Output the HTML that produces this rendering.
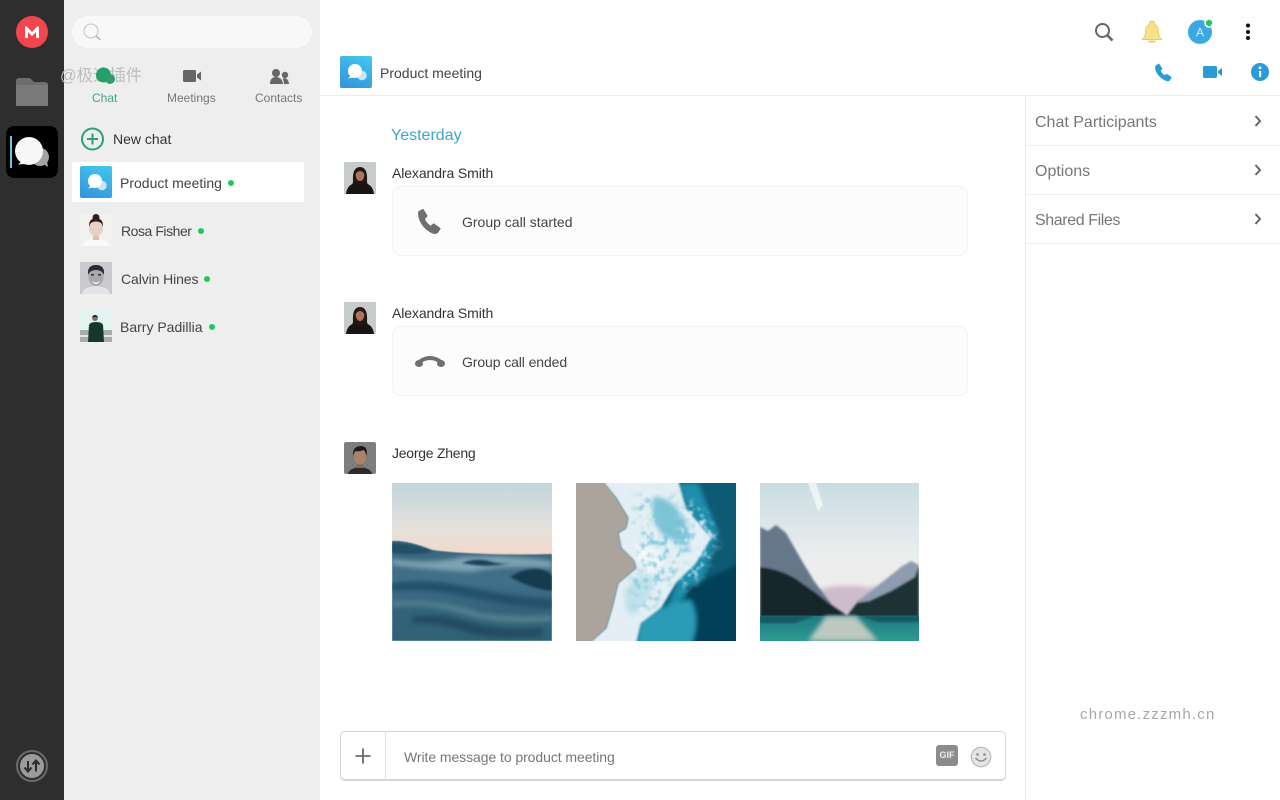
<!DOCTYPE html>
<html lang="en">
<head>
<meta charset="utf-8">
<title>Product meeting</title>
<style>
html,body{margin:0;padding:0;width:1280px;height:800px;overflow:hidden;background:#fff;font-family:"Liberation Sans","Noto Sans CJK SC",sans-serif;color:#3d3d3d}
.a{position:absolute}
.t{position:absolute;white-space:nowrap;line-height:18px;font-size:14px;transform:translateY(-9px)}
svg{position:absolute;display:block;overflow:visible}
#side{left:0;top:0;width:64px;height:800px;background:#2e2e2e}
#list{left:64px;top:0;width:256px;height:800px;background:#eeeeee}
.card{position:absolute;left:392px;width:574px;height:68px;background:#fdfcfd;border:1px solid #f3f2f4;border-radius:9px}
.rl{position:absolute;left:1026px;right:0;height:1px;background:#ececec}
.dot{position:absolute;width:6px;height:6px;border-radius:50%;background:#21c95d}
</style>
</head>
<body>
<div class="a" id="side"></div>
<div class="a" id="list"></div>

<!-- left rail -->
<svg style="left:0;top:0" width="64" height="800" viewBox="0 0 64 800">
  <circle cx="32" cy="32" r="16" fill="#f2454f"/>
  <path d="M25 38V26.500h1.800L32 32l5.200-5.500H39V38h-3v-6l-4 4.200-4-4.200V38z" fill="#fff"/>
  <path d="M16 81q0-3 3-3h11l4 4h11q3 0 3 3v21H16z" fill="#6d6d6d"/>
  <path d="M16 85h32v21H16z" fill="#7a7a7a"/>
  <rect x="6" y="126" width="52" height="52" rx="8" fill="#000"/>
  <rect x="10" y="136" width="2" height="32" fill="#6cc3e0"/>
  <circle cx="40" cy="157" r="9" fill="#a4a4a4"/>
  <path d="M43 164l5 3-1-6z" fill="#a4a4a4"/>
  <circle cx="29" cy="151" r="14" fill="#f7f7f7"/>
  <path d="M22 161l-4 3.500 7-.5z" fill="#f7f7f7"/>
  <circle cx="32" cy="766" r="15" fill="none" stroke="#6a6a6a" stroke-width="2"/>
  <circle cx="32" cy="766" r="12" fill="#9b9b9b"/>
  <path d="M28 761v10M24.500 767.500L28 771.500l3.500-4M36 771.500v-10M32.500 764.500L36 760.500l3.500 4" fill="none" stroke="#2b2b2b" stroke-width="2"/>
</svg>

<!-- search -->
<div class="a" style="left:72px;top:16px;width:240px;height:32px;border-radius:16px;background:#f8f8f8"></div>
<svg style="left:80px;top:22px" width="24" height="20" viewBox="0 0 24 20">
  <circle cx="11" cy="9" r="7" fill="none" stroke="#c6c6c6" stroke-width="1.100"/>
  <path d="M16 14l4.500 4" stroke="#bcbcbc" stroke-width="1.600"/>
</svg>

<!-- watermark -->
<div class="t" style="left:60px;top:76px;font-size:16.400px;color:#bdbdbd">@极速插件</div>

<!-- tabs -->
<svg style="left:64px;top:60px" width="256" height="32" viewBox="0 0 256 32">
  <circle cx="39.500" cy="15" r="7.500" fill="#23a069"/>
  <circle cx="46" cy="19" r="5" fill="#2d9d6e"/>
  <path d="M119 11.500q0-1.500 1.500-1.500h10q1.500 0 1.500 1.500v9q0 1.500-1.500 1.500h-10q-1.500 0-1.500-1.500zM133 14.500l4-3v9l-4-3z" fill="#666"/>
  <circle cx="212" cy="13" r="4" fill="#666"/>
  <circle cx="221" cy="15" r="3.200" fill="#666"/>
  <path d="M206 24q0-7 6-7t7 7zM218.500 18.500q6-1.500 6.500 5.500h-5q0-3-1.500-5.500z" fill="#666"/>
</svg>
<div class="t" style="left:92px;top:98px;font-size:12px;color:#41a77e">Chat</div>
<div class="t" style="left:167px;top:98px;font-size:12px;color:#777">Meetings</div>
<div class="t" style="left:255px;top:98px;font-size:12px;color:#777">Contacts</div>

<!-- new chat -->
<svg style="left:80px;top:127px" width="24" height="24" viewBox="0 0 24 24">
  <circle cx="12.500" cy="12" r="10.500" fill="none" stroke="#2a9f7a" stroke-width="2"/>
  <path d="M12.500 6.500v11M7 12h11" stroke="#2a9f7a" stroke-width="2"/>
</svg>
<div class="t" style="left:113px;top:139px;color:#333">New chat</div>

<!-- chat rows -->
<div class="a" style="left:72px;top:162px;width:232px;height:40px;background:#fff"></div>
<svg style="left:80px;top:166px" width="32" height="32" viewBox="0 0 32 32">
  <defs><linearGradient id="bg1" x1="0.700" y1="0" x2="0.300" y2="1"><stop offset="0" stop-color="#42c3ee"/><stop offset="1" stop-color="#3497dc"/></linearGradient></defs>
  <rect width="32" height="32" rx="2" fill="url(#bg1)"/>
  <circle cx="22" cy="19.500" r="4.800" fill="#c9e4f3"/>
  <circle cx="15" cy="15" r="7" fill="#fff"/>
  <path d="M10.500 20l-2.500 2.500 5-1z" fill="#fff"/>
</svg>
<div class="t" style="left:120px;top:183px;color:#444">Product meeting</div>
<div class="dot" style="left:228px;top:180px"></div>

<svg style="left:80px;top:214px" width="32" height="32" viewBox="0 0 32 32">
  <rect width="32" height="32" fill="#f1f1f0"/>
  <path d="M3 32q1-7 13-8 12 1 13 8z" fill="#f9f9f9"/>
  <rect x="13" y="20" width="6" height="6" fill="#dcc0ae"/>
  <ellipse cx="16" cy="14" rx="7" ry="8" fill="#e8d2c5"/>
  <path d="M9 13q-.5-8.500 7-9 7.500.5 7 9-1-5.500-7-5.500T9 13z" fill="#2a211e"/>
  <circle cx="16" cy="3.500" r="3.500" fill="#2a211e"/>
</svg>
<div class="t" style="left:121px;top:231px;color:#444;letter-spacing:-.45px">Rosa Fisher</div>
<div class="dot" style="left:198px;top:228px"></div>

<svg style="left:80px;top:262px" width="32" height="32" viewBox="0 0 32 32">
  <rect width="32" height="32" fill="#c9cad0"/>
  <path d="M2 32q1-7 14-8 13 1 14 8z" fill="#e4e4e8"/>
  <ellipse cx="16" cy="15" rx="7.500" ry="9" fill="#a9a9ad"/>
  <path d="M8 13q-1-10 8-10 9 0 8 10-2-5-8-5t-8 5z" fill="#2c2c30"/>
  <path d="M12 19q4 3 8 0-1 3-4 3t-4-3z" fill="#eee"/>
  <rect x="11" y="12" width="3" height="1.500" fill="#333"/><rect x="18" y="12" width="3" height="1.500" fill="#333"/>
</svg>
<div class="t" style="left:121px;top:279px;color:#444;letter-spacing:-.1px">Calvin Hines</div>
<div class="dot" style="left:204px;top:276px"></div>

<svg style="left:80px;top:310px" width="32" height="32" viewBox="0 0 32 32">
  <rect width="32" height="32" fill="#e2f3f1"/>
  <rect y="20" width="32" height="12" fill="#a5aca9"/>
  <rect y="25" width="32" height="2" fill="#e5e5e2"/>
  <path d="M8 32l1-17q1-3 7-3t7 3l1 17z" fill="#17362c"/>
  <circle cx="15" cy="8" r="3" fill="#8a6a58"/>
  <path d="M12 7q3-4 6 0z" fill="#222"/>
</svg>
<div class="t" style="left:120px;top:327px;color:#444">Barry Padillia</div>
<div class="dot" style="left:209px;top:324px"></div>

<!-- header -->
<div class="a" style="left:320px;top:95px;width:960px;height:1px;background:#ececec"></div>
<svg style="left:340px;top:56px" width="32" height="32" viewBox="0 0 32 32">
  <rect width="32" height="32" rx="2" fill="url(#bg1)"/>
  <circle cx="22" cy="19.500" r="4.800" fill="#c9e4f3"/>
  <circle cx="15" cy="15" r="7" fill="#fff"/>
  <path d="M10.500 20l-2.500 2.500 5-1z" fill="#fff"/>
</svg>
<div class="t" style="left:380px;top:73px;color:#444">Product meeting</div>

<svg style="left:1090px;top:16px" width="170" height="32" viewBox="0 0 170 32">
  <circle cx="12.500" cy="14.500" r="6.500" fill="none" stroke="#666" stroke-width="2"/>
  <path d="M17.500 19.500l5 5" stroke="#666" stroke-width="2.600"/>
  <path d="M52.500 23.500q3-2.500 3-7.500 0-6 4-7.500v-1q0-2.500 2.500-2.500t2.500 2.500v1q4 1.500 4 7.500 0 5 3 7.500z" fill="#f7e08e" stroke="#eccc5d" stroke-width="1"/>
  <path d="M57.500 24.500h9q-1 2.500-4.500 2.500t-4.500-2.500z" fill="#f0d570"/>
  <circle cx="110" cy="16" r="12" fill="#38a9e2"/>
  <text x="110" y="20.500" text-anchor="middle" font-size="12" fill="#d9effa" font-family="Liberation Sans, sans-serif">A</text>
  <circle cx="119" cy="7" r="4.800" fill="#fff"/>
  <circle cx="119" cy="7" r="3.200" fill="#22c85a"/>
  <circle cx="158" cy="9.500" r="2" fill="#111"/>
  <circle cx="158" cy="16" r="2" fill="#111"/>
  <circle cx="158" cy="22" r="2" fill="#111"/>
</svg>
<svg style="left:1150px;top:60px" width="124" height="24" viewBox="0 0 124 24">
  <path d="M6.500 5.500l2.500-1.500 3 4.800-1.800 2q1.500 3 4.500 5l2-1.500 4.500 3-1.500 2.800q-1.500 1.200-3.500.4C10.500 18 6.500 13.500 5.500 8.500q-.2-2 1-3z" fill="#2b9bd6" stroke="#2b9bd6" stroke-width=".8"/>
  <path d="M53 7.500q0-1.500 1.500-1.500h11q1.500 0 1.500 1.500v9q0 1.500-1.500 1.500h-11q-1.500 0-1.500-1.500zM68 11l4-3v8l-4-3z" fill="#2b9bd6"/>
  <circle cx="110" cy="12" r="9" fill="#2b9bd6"/>
  <rect x="109" y="11" width="2.200" height="6" fill="#fff"/>
  <circle cx="110" cy="7.800" r="1.400" fill="#fff"/>
</svg>

<!-- messages -->
<div class="t" style="left:391px;top:136px;font-size:16px;color:#3ba6cf">Yesterday</div>

<svg style="left:344px;top:162px" width="32" height="32" viewBox="0 0 32 32">
  <defs><g id="alex">
    <rect width="32" height="32" fill="#c8ccc8"/>
    <path d="M9 20q-1-15 7-15 8 0 7 15l2 6H7z" fill="#241713"/>
    <ellipse cx="16" cy="13" rx="4.300" ry="6" fill="#a9765c"/>
    <path d="M2 32q1-9 9-11l5 3 5-3q8 2 9 11z" fill="#191414"/>
    <path d="M11.500 12q0-5 4.500-5t4.500 5q-2-3-4.500-3t-4.500 3z" fill="#241713"/>
  </g></defs>
  <use href="#alex"/>
</svg>
<div class="t" style="left:392px;top:173px;color:#333;letter-spacing:-.1px">Alexandra Smith</div>
<div class="card" style="top:186px"></div>
<svg style="left:416px;top:207px" width="28" height="28" viewBox="0 0 28 28">
  <path d="M3 4.500L7 2.500l4 6.500-2.800 3q2 4.500 6.500 7.500l3-2.500 6.300 4.500-2.500 4q-2 1.500-4.500.5C10 23 4.500 17 3 9.500 2.600 7 2.400 5.800 3 4.500z" fill="#6f6f6f" stroke="#6f6f6f" stroke-width="1.200" stroke-linejoin="round"/>
</svg>
<div class="t" style="left:462px;top:222px;color:#444">Group call started</div>

<svg style="left:344px;top:302px" width="32" height="32" viewBox="0 0 32 32"><use href="#alex"/></svg>
<div class="t" style="left:392px;top:313px;color:#333;letter-spacing:-.1px">Alexandra Smith</div>
<div class="card" style="top:326px"></div>
<svg style="left:414px;top:350px" width="32" height="24" viewBox="0 0 32 24">
  <path d="M5 12Q16 4 27 12" fill="none" stroke="#6f6f6f" stroke-width="3.800"/>
  <ellipse cx="5" cy="13.500" rx="4" ry="3.500" fill="#6f6f6f"/>
  <ellipse cx="27" cy="13.500" rx="4" ry="3.500" fill="#6f6f6f"/>
</svg>
<div class="t" style="left:462px;top:362px;color:#444;letter-spacing:-.1px">Group call ended</div>

<svg style="left:344px;top:442px" width="32" height="32" viewBox="0 0 32 32">
  <rect width="32" height="32" rx="2" fill="#7d7f7e"/>
  <path d="M4 32q1-6 12-7 11 1 12 7z" fill="#2d2a28"/>
  <rect x="13" y="20" width="6" height="6" fill="#8f6750"/>
  <ellipse cx="16" cy="15" rx="6" ry="7.500" fill="#ad826a"/>
  <path d="M9.500 14q-2-9 7-10 8 0 6 10-1-5-3-6-5 2-8.500 1-1 2-1.500 5z" fill="#1d1a19"/>
</svg>
<div class="t" style="left:392px;top:453px;color:#333;letter-spacing:-.25px">Jeorge Zheng</div>

<!-- photo 1 -->
<svg style="left:392px;top:483px" width="160" height="158" viewBox="0 0 160 158">
  <defs>
    <linearGradient id="sky1" x1="0" y1="0" x2="0" y2="1"><stop offset="0" stop-color="#c2d5dc"/><stop offset=".55" stop-color="#e4e1dc"/><stop offset=".85" stop-color="#f0dacd"/><stop offset="1" stop-color="#f3d5c5"/></linearGradient>
    <linearGradient id="sea1" x1="0" y1="0" x2="0" y2="1"><stop offset="0" stop-color="#3a6579"/><stop offset=".4" stop-color="#41708a"/><stop offset=".7" stop-color="#336379"/><stop offset="1" stop-color="#2f6275"/></linearGradient>
    <filter id="b1" x="-10%" y="-10%" width="120%" height="120%"><feGaussianBlur stdDeviation="1"/></filter>
    <filter id="b2" x="-10%" y="-10%" width="120%" height="120%"><feGaussianBlur stdDeviation="2.500"/></filter>
    <filter id="b3" x="-10%" y="-10%" width="120%" height="120%"><feGaussianBlur stdDeviation=".5"/></filter>
    <filter id="spW" x="-20%" y="-20%" width="140%" height="140%" color-interpolation-filters="sRGB"><feGaussianBlur in="SourceAlpha" stdDeviation="5" result="s"/><feTurbulence type="fractalNoise" baseFrequency=".16" numOctaves="3" seed="7"/><feColorMatrix values="0 0 0 0 .9  0 0 0 0 .96  0 0 0 0 .98  4 0 0 0 -1.900"/><feGaussianBlur stdDeviation=".7"/><feComposite in2="s" operator="in"/></filter>
    <filter id="spB" x="-20%" y="-20%" width="140%" height="140%" color-interpolation-filters="sRGB"><feGaussianBlur in="SourceAlpha" stdDeviation="5" result="s"/><feTurbulence type="fractalNoise" baseFrequency=".14" numOctaves="3" seed="11"/><feColorMatrix values="0 0 0 0 .5  0 0 0 0 .78  0 0 0 0 .86  4 0 0 0 -2"/><feGaussianBlur stdDeviation=".7"/><feComposite in2="s" operator="in"/></filter>
    <clipPath id="c1"><rect width="160" height="158"/></clipPath>
    <clipPath id="c2"><rect width="160" height="158"/></clipPath>
    <clipPath id="c3"><rect width="159" height="158"/></clipPath>
  </defs>
  <g clip-path="url(#c1)">
    <rect width="160" height="80" fill="url(#sky1)"/>
    <path d="M0 58q15-1 40 9 50 6 120 4v87H0z" fill="url(#sea1)" filter="url(#b3)"/>
    <g filter="url(#b2)">
      <path d="M0 76q40 6 70-2 40-3 90 4v7q-50-3-80 4-50-3-80-7z" fill="#7da2b3"/>
      <path d="M0 100q40-5 80 5 40 9 80 11v10q-50-4-90-13-40-8-70-5z" fill="#22506a"/>
      <path d="M0 118q50-2 90 12 40 5 70 2v6q-50 5-90-7-40-12-70-7z" fill="#52808f"/>
      <path d="M20 134q30-5 60 6 30 8 70 5v8q-50 5-80-5-30-10-50-7z" fill="#214c62"/>
    </g>
    <g filter="url(#b1)">
      <path d="M0 60q25 1 42 9-22 4-42 1z" fill="#24506a"/>
      <path d="M70 80q15-6 30-1 10 3 20 0-20 7-50 1z" fill="#1c4156"/>
      <path d="M118 94q14-9 28-8 14 2 14 9v13q-20-2-42-14z" fill="#173a50"/>
    </g>
  </g>
</svg>

<!-- photo 2 -->
<svg style="left:576px;top:483px" width="160" height="158" viewBox="0 0 160 158">
  <g clip-path="url(#c2)">
    <rect width="160" height="158" fill="#075a76"/>
    <g filter="url(#b2)">
      <path d="M120 -5h45v60l-15 40-30 20 20-70z" fill="#0b5a75"/>
      <path d="M100 0h22l20 50-15 45-40 40 20-50 20-30z" fill="#1a8dab"/>
      <path d="M110 105l55-25v85h-60z" fill="#063f58"/>
      <path d="M65 135q25-15 50-18 10 20 0 45H60z" fill="#2a9cb8"/>
    </g>
    <g filter="url(#b1)">
      <path d="M25 -3H102L110 25 135 55 120 80 100 100 85 125 65 140 60 161H12L30 145 36 125 42 100 60 85 58 78 45 65 42 50 50 45 52 35 40 15z" fill="#e3eff4"/>
    </g>
    <g filter="url(#b2)">
      <path d="M78 14q16 0 27 17 12 17 6 36-12-10-24-15-14-16-9-38z" fill="#7cc3d6"/>
      <path d="M50 105q12-12 25-15 5 15-3 26-10 5-15 18-12-8-7-29z" fill="#bfe2ea"/>
      <path d="M62 60q15 5 28 15-10 15-20 15-12-10-8-30z" fill="#f4f8fa"/>
    </g>
    <path d="M108 15L128 30 142 58 128 85 108 108 102 60z" fill="#fff" filter="url(#spW)"/>
    <path d="M60 12L100 12 122 55 100 92 80 122 62 128 52 102 66 82 60 40z" fill="#fff" filter="url(#spB)"/>
    <path d="M-3 -3H26L40 15 52 35 50 45 42 50 45 65 58 78 60 85 42 100 36 125 30 145 13 161H-3z" fill="#aaa49c" filter="url(#b3)"/>
  </g>
</svg>

<!-- photo 3 -->
<svg style="left:760px;top:483px" width="159" height="158" viewBox="0 0 159 158">
  <defs>
    <linearGradient id="sky3" x1="0" y1="0" x2="0" y2="1"><stop offset="0" stop-color="#c9dde2"/><stop offset=".55" stop-color="#eceeee"/><stop offset="1" stop-color="#f0e9ec"/></linearGradient>
    <linearGradient id="lake" x1="0" y1="0" x2="0" y2="1"><stop offset="0" stop-color="#1e7a80"/><stop offset="1" stop-color="#2f9a92"/></linearGradient>
  </defs>
  <g clip-path="url(#c3)">
    <rect width="159" height="135" fill="url(#sky3)"/>
    <path d="M48 0l8 0 7 22-5 6z" fill="#eef3f4" filter="url(#b3)"/>
    <path d="M55 108q20-8 50-4 15 2 25-10l-10 32-50 8z" fill="#cdbccb" filter="url(#b2)"/>
    <g filter="url(#b1)">
      <path d="M0 44l8 4 8-6 10 8 16 28 12 20 18 24 18 12H0z" fill="#66778a"/>
      <path d="M0 84q20 2 36 12l20 14 18 14 15 10H0z" fill="#14282c"/>
      <path d="M86 134l14-18 22-10 20-18 9-8 8 4v50z" fill="#1a3336"/>
      <path d="M95 120l24-18 22-18 10-6 8 4-4 12-24 14-22 10z" fill="#8f9cb0"/>
    </g>
    <rect y="133" width="159" height="25" fill="url(#lake)"/>
    <path d="M66 133h30l22 25H48z" fill="#bcc8c0" filter="url(#b2)"/>
    <path d="M0 133h55l-20 7H0zM159 133H100l18 6h41z" fill="#14585e" filter="url(#b1)"/>
  </g>
</svg>

<!-- composer -->
<div class="a" style="left:340px;top:731px;width:664px;height:47px;border:1px solid #d5d5d5;border-bottom:2px solid #d5d5d5;border-radius:5px;background:#fff"></div>
<div class="a" style="left:385px;top:731px;width:1px;height:49px;background:#dedede"></div>
<svg style="left:354px;top:747px" width="18" height="18" viewBox="0 0 18 18"><path d="M9 1.500v15M1.500 9h15" stroke="#6a6a6a" stroke-width="1.800"/></svg>
<div class="t" style="left:404px;top:757px;color:#777;letter-spacing:-.07px">Write message to product meeting</div>
<div class="a" style="left:936px;top:745px;width:22px;height:21px;background:#8c8c8c;border-radius:3px;color:#eee;font-size:9px;font-weight:bold;line-height:21px;text-align:center">GIF</div>
<svg style="left:970px;top:746px" width="22" height="22" viewBox="0 0 22 22">
  <circle cx="11" cy="11" r="9.700" fill="#e4e4e4" stroke="#bdbdbd" stroke-width="1.300"/>
  <circle cx="7.500" cy="8.500" r="1.300" fill="#8c8c8c"/><circle cx="14.500" cy="8.500" r="1.300" fill="#8c8c8c"/>
  <path d="M5.500 12q5.500 6 11 0" fill="none" stroke="#8c8c8c" stroke-width="1.500"/>
</svg>

<!-- right panel -->
<div class="a" style="left:1025px;top:96px;width:1px;height:704px;background:#ececec"></div>
<div class="t" style="left:1035px;top:123px;font-size:16px;color:#777">Chat Participants</div>
<div class="rl" style="top:145px"></div>
<div class="t" style="left:1035px;top:172px;font-size:16px;color:#777">Options</div>
<div class="rl" style="top:194px"></div>
<div class="t" style="left:1035px;top:221px;font-size:16px;color:#777;letter-spacing:-.4px">Shared Files</div>
<div class="rl" style="top:243px"></div>
<svg style="left:1252px;top:112px" width="12" height="116" viewBox="0 0 12 116">
  <path d="M3.500 4l4.500 5-4.500 5M3.500 53l4.500 5-4.500 5M3.500 102l4.500 5-4.500 5" fill="none" stroke="#666" stroke-width="2"/>
</svg>

<div class="t" style="left:1080px;top:715px;font-size:15px;color:#a8a8a8;letter-spacing:1.200px">chrome.zzzmh.cn</div>
</body>
</html>
